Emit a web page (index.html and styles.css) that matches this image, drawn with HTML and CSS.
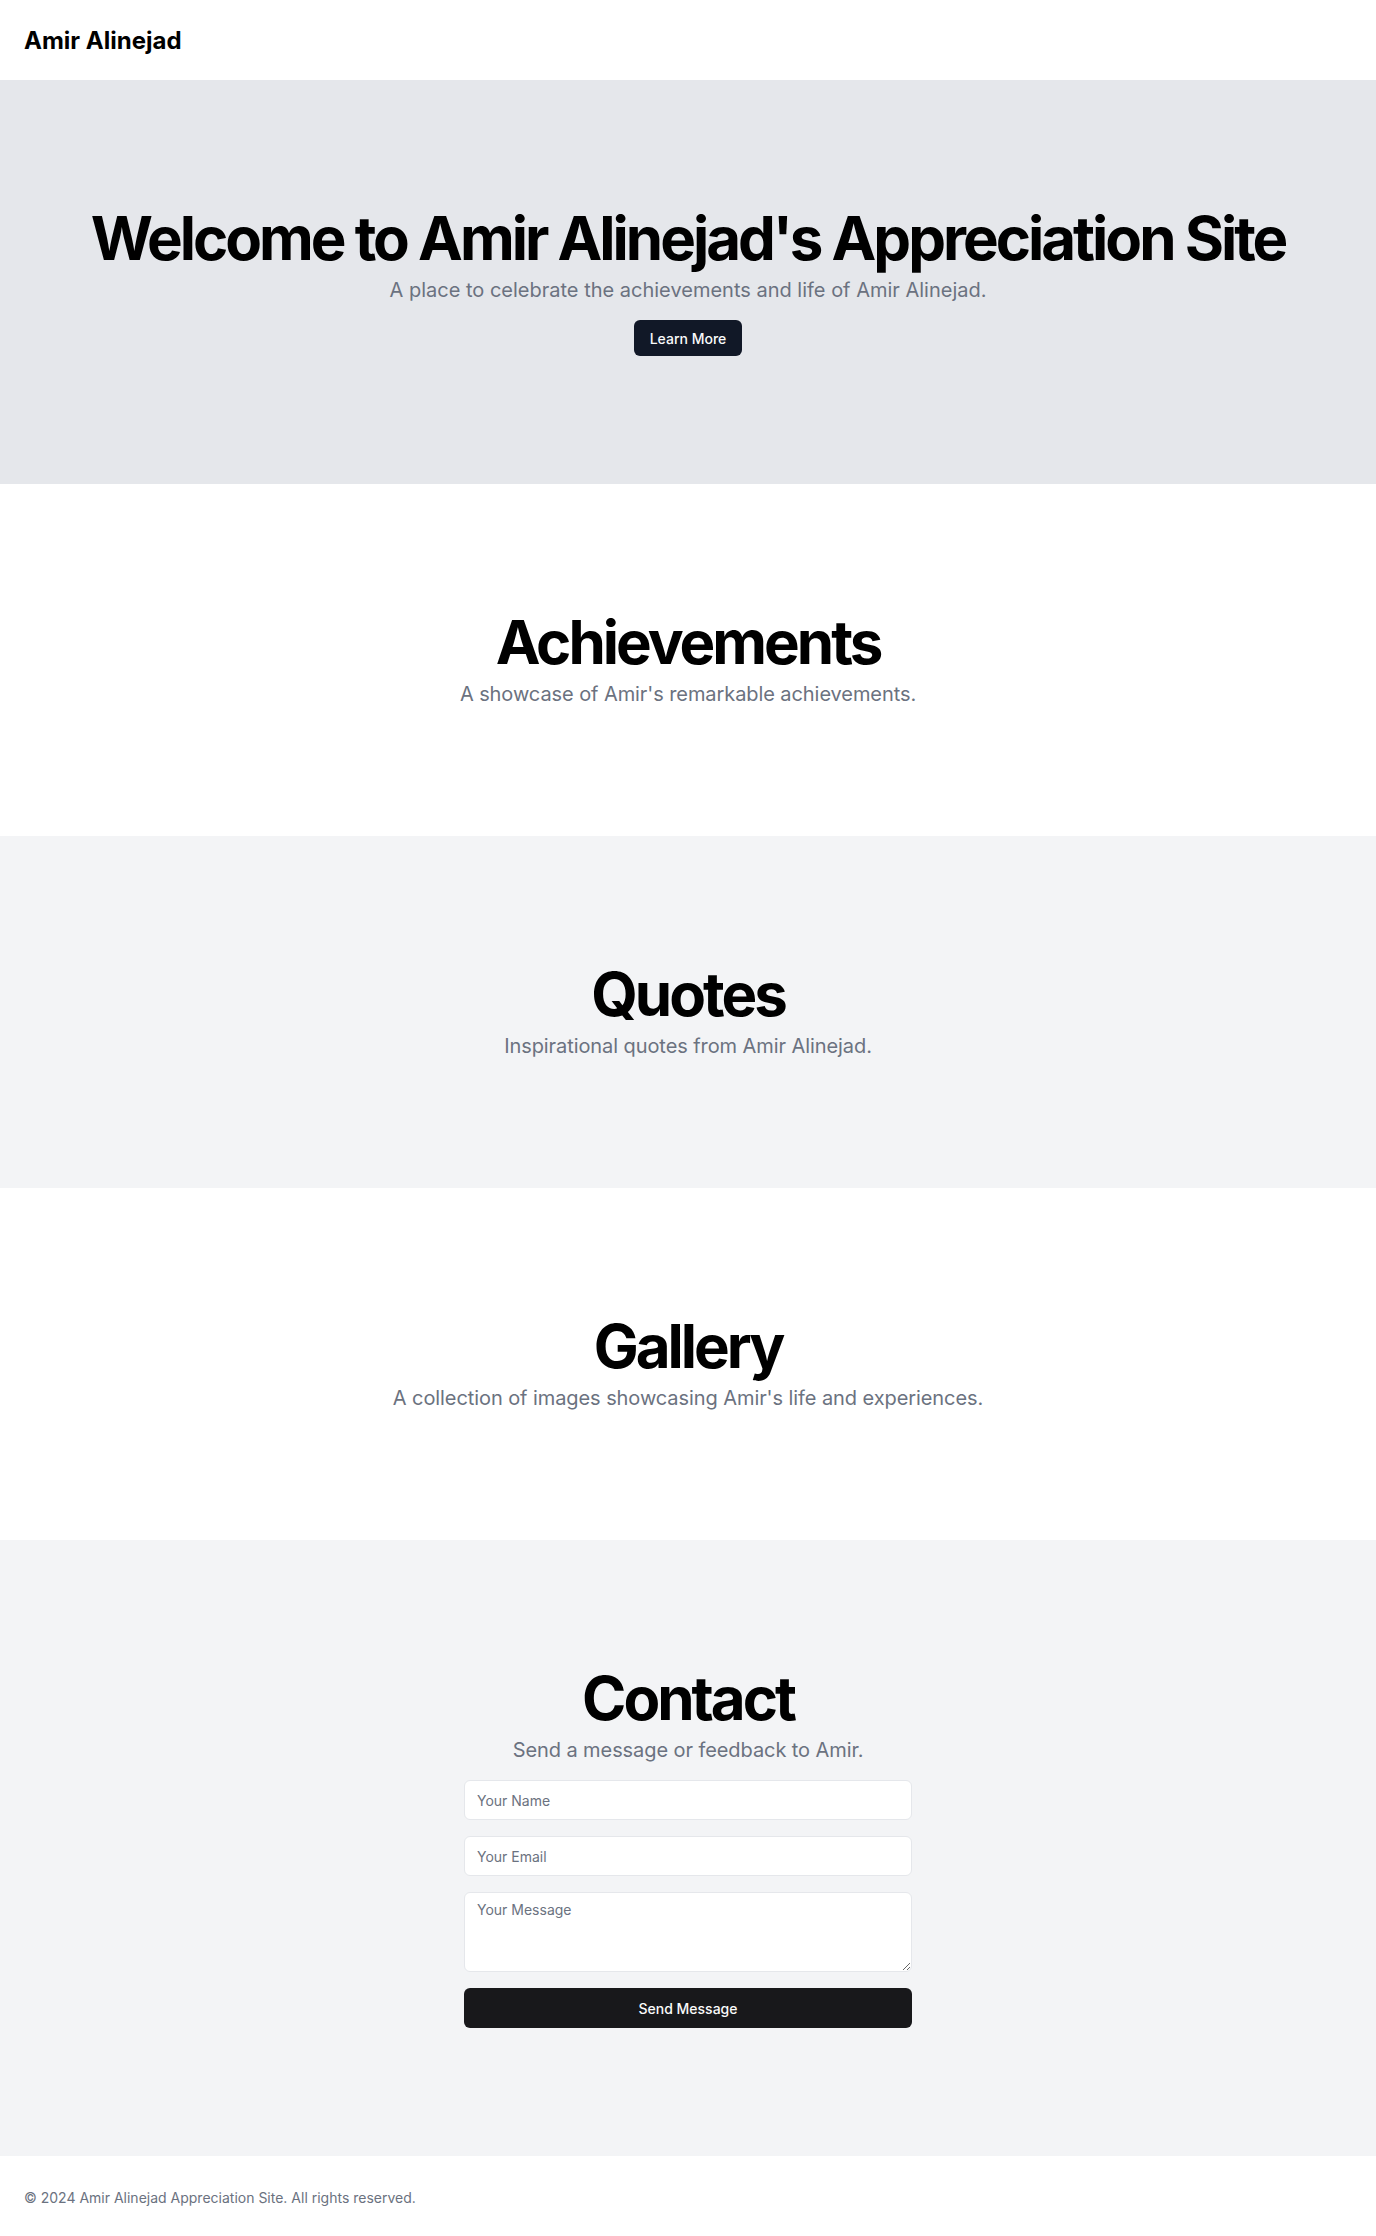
FILE: index.html
```html
<!DOCTYPE html>
<html lang="en">
<head>
  <meta charset="utf-8">
  <title>Amir Alinejad</title>
  <link rel="stylesheet" href="styles.css">
</head>
<body>
  <header class="site-header">
    <a href="#" class="brand">Amir Alinejad</a>
  </header>

  <main>
    <section class="hero">
      <div class="section-inner">
        <div class="titles">
          <h1 class="hero-title">Welcome to Amir Alinejad's Appreciation Site</h1>
          <p class="hero-sub">A place to celebrate the achievements and life of Amir Alinejad.</p>
        </div>
        <a href="#achievements" class="learn-button">Learn More</a>
      </div>
    </section>

    <section class="block" id="achievements">
      <div class="section-inner">
        <div class="titles">
          <h2 class="block-title">Achievements</h2>
          <p class="block-sub">A showcase of Amir's remarkable achievements.</p>
        </div>
      </div>
    </section>

    <section class="block block-gray" id="quotes">
      <div class="section-inner">
        <div class="titles">
          <h2 class="block-title">Quotes</h2>
          <p class="block-sub">Inspirational quotes from Amir Alinejad.</p>
        </div>
      </div>
    </section>

    <section class="block" id="gallery">
      <div class="section-inner">
        <div class="titles">
          <h2 class="block-title">Gallery</h2>
          <p class="block-sub">A collection of images showcasing Amir's life and experiences.</p>
        </div>
      </div>
    </section>

    <section class="block block-gray" id="contact">
      <div class="section-inner">
        <div class="titles">
          <h2 class="block-title">Contact</h2>
          <p class="block-sub">Send a message or feedback to Amir.</p>
        </div>
        <form class="contact-form" onsubmit="return false;">
          <input type="text" class="field" placeholder="Your Name">
          <input type="email" class="field" placeholder="Your Email">
          <textarea class="field field-area" placeholder="Your Message"></textarea>
          <button type="submit" class="send-button">Send Message</button>
        </form>
      </div>
    </section>
  </main>

  <footer class="site-footer">
    <p>© 2024 Amir Alinejad Appreciation Site. All rights reserved.</p>
  </footer>
</body>
</html>
```

FILE: styles.css
```css
* {
  box-sizing: border-box;
}

html, body {
  margin: 0;
  padding: 0;
}

body {
  font-family: Inter, "Noto Sans", sans-serif;
  color: #030712;
  background: #fff;
}

/* header */
.site-header {
  height: 80px;
  padding: 0 24px;
  display: flex;
  align-items: center;
}

.brand {
  font-size: 24px;
  font-weight: 700;
  color: #000;
  text-decoration: none;
}

/* sections */
.hero {
  background: #e5e7eb;
  padding: 128px 24px;
}

.block {
  padding: 128px 24px;
}

.block-gray {
  background: #f3f4f6;
}

.section-inner {
  display: flex;
  flex-direction: column;
  align-items: center;
  gap: 16px;
  text-align: center;
}

.titles {
  display: flex;
  flex-direction: column;
  gap: 8px;
}

.hero-title,
.block-title {
  margin: 0;
  font-size: 60px;
  line-height: 1;
  font-weight: 700;
  letter-spacing: -0.05em;
  color: #000;
}

.hero-sub,
.block-sub {
  margin: 0;
  font-size: 20px;
  line-height: 28px;
  color: #6b7280;
}

.block-sub {
  letter-spacing: -0.004em;
}

.learn-button {
  display: inline-flex;
  align-items: center;
  height: 36px;
  padding: 0 16px;
  border-radius: 6px;
  background: #111827;
  color: #f9fafb;
  font-size: 14px;
  font-weight: 500;
  text-decoration: none;
}

/* contact form */
.contact-form {
  width: 100%;
  max-width: 448px;
  display: flex;
  flex-direction: column;
  gap: 16px;
}

.field {
  height: 40px;
  width: 100%;
  padding: 8px 12px;
  border: 1px solid #e5e7eb;
  border-radius: 6px;
  background: #fff;
  font-family: Inter, sans-serif;
  font-size: 14px;
  color: #030712;
}

.field::placeholder {
  color: #6b7280;
}

.field-area {
  height: 80px;
  resize: vertical;
}

.send-button {
  height: 40px;
  border: none;
  border-radius: 6px;
  background: #18181b;
  color: #fafafa;
  font-family: Inter, sans-serif;
  font-size: 14px;
  font-weight: 500;
}

/* footer */
.site-footer {
  padding: 32px 24px;
}

.site-footer p {
  margin: 0;
  font-size: 14px;
  line-height: 20px;
  color: #6b7280;
}
```
